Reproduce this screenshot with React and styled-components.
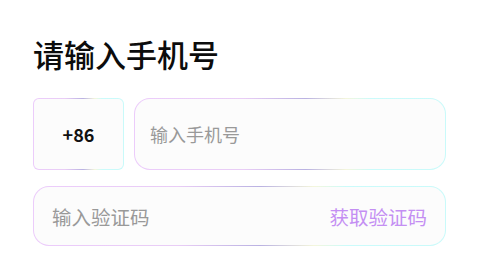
import styled, { createGlobalStyle } from "styled-components"

const GlobalStyle = createGlobalStyle`
    html, body {
        margin: 0;
        padding: 0;
        background: #ffffff;
    }
    body {
        font-family: "Noto Sans CJK SC", "Noto Sans", sans-serif;
    }
`

const Page = styled.div`
    display: flex;
    flex-direction: column;
    padding: 32px 34px 0 33px;
    width: 480px;
    box-sizing: border-box;
`

const Title = styled.h1`
    margin: 0 0 22px 0;
    font-size: 31px;
    line-height: 44px;
    font-weight: 500;
    color: #0c0c0c;
`

const Row = styled.div`
    display: flex;
    gap: 10px;
    margin-bottom: 16px;
`

const Field = styled.div`
    display: flex;
    align-items: center;
    box-sizing: border-box;
    height: ${(props) => props.h || 72}px;
    width: ${(props) => (props.w ? props.w + "px" : "auto")};
    flex: ${(props) => (props.grow ? "1" : "none")};
    padding: 0 ${(props) => (props.center ? 0 : 18)}px 0 ${(props) => (props.center ? 0 : props.pl || 15)}px;
    justify-content: ${(props) => (props.center ? "center" : "space-between")};
    border: 1.3px solid transparent;
    border-radius: ${(props) => props.r || 16}px;
    background:
        linear-gradient(#fcfcfc, #fcfcfc) padding-box,
        linear-gradient(90deg, #ecccfb 0%, #e9cdf6 35%, #bab2e2 55%, #f4f6dc 68%, #cbfbfb 76%, #c9fafa 100%) border-box;
`

const Code = styled.span`
    font-size: 18px;
    font-weight: 700;
    color: #111;
`

const Placeholder = styled.span`
    font-size: ${(props) => props.size || 18}px;
    color: #999999;
`

const SendButton = styled.span`
    font-size: 19.5px;
    color: #c48ff3;
    cursor: pointer;
`

function App() {
    return (
        <>
            <GlobalStyle />
            <Page>
                <Title>请输入手机号</Title>
                <Row>
                    <Field w={91} r={6} center>
                        <Code>+86</Code>
                    </Field>
                    <Field grow>
                        <Placeholder>输入手机号</Placeholder>
                    </Field>
                </Row>
                <Field h={60} pl={18}>
                    <Placeholder size={19.5}>输入验证码</Placeholder>
                    <SendButton>获取验证码</SendButton>
                </Field>
            </Page>
        </>
    )
}

export default App
